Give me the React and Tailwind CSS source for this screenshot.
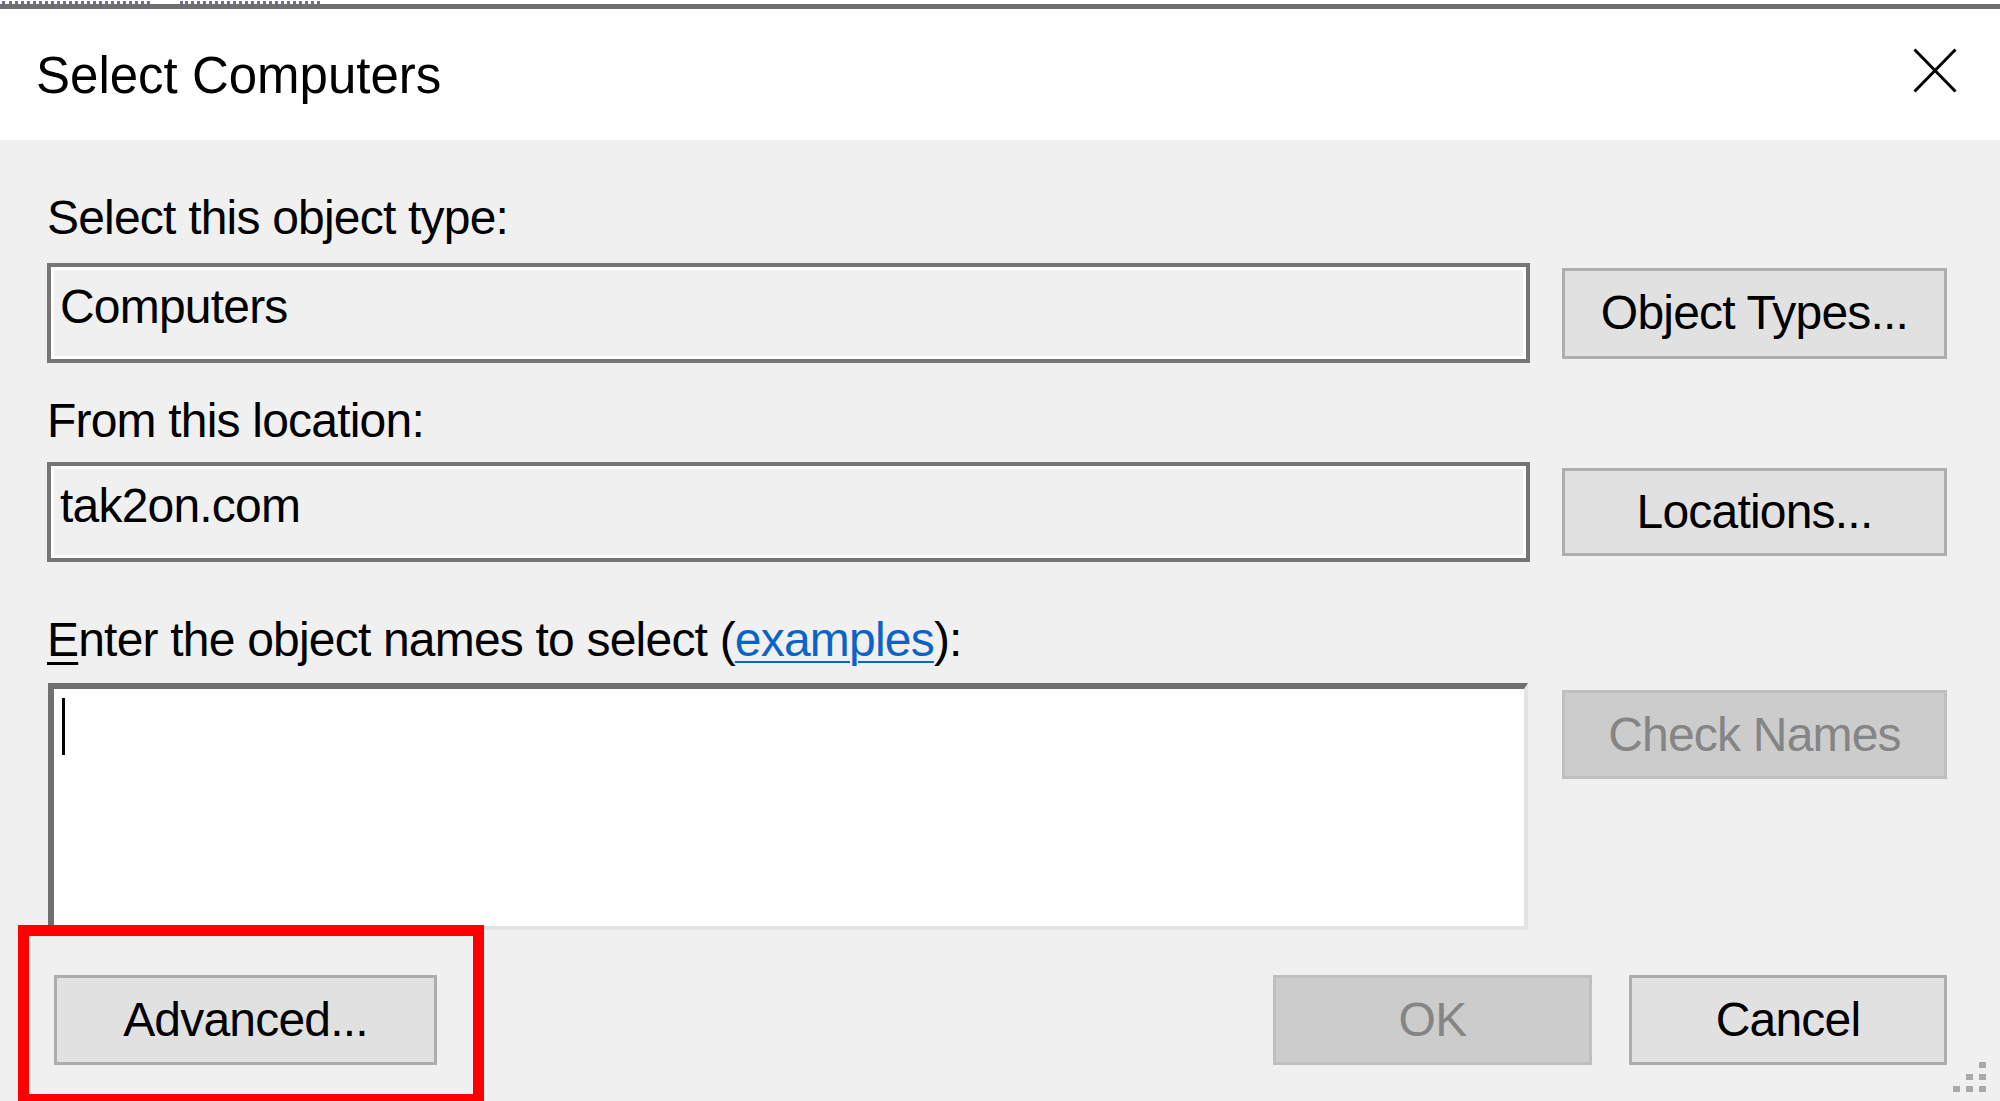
import React from "react";

function Btn({ children, disabled, className = "" }) {
  return (
    <div
      className={
        "flex items-center justify-center border-[3px] text-[48px] leading-[48px] tracking-[-0.8px] " +
        (disabled
          ? "bg-[#cccccc] border-[#bfbfbf] text-[#858585] "
          : "bg-[#e1e1e1] border-[#adadad] text-black ") +
        className
      }
    >
      {children}
    </div>
  );
}

function ReadBox({ children }) {
  return (
    <div className="w-[1483px] h-[100px] border-[4px] border-[#767676] bg-[#f0f0f0] shadow-[inset_0_0_0_3px_#ffffff] pl-[9px] pt-[16px] text-[48px] leading-[48px] tracking-[-0.8px] text-black">
      {children}
    </div>
  );
}

export default function App() {
  return (
    <div className="relative w-[2000px] h-[1101px] overflow-hidden bg-[#f0f0f0] font-['Liberation_Sans',Arial,sans-serif] text-black">
      {/* top strip with cut-off fragments of the window behind */}
      <div className="h-[4px] bg-white flex items-end gap-[30px] pl-[2px]">
        <div className="w-[148px] h-[3px] border-b-[3px] border-dotted border-[#7a6a9a]" />
        <div className="w-[140px] h-[3px] border-b-[3px] border-dotted border-[#7a6a9a]" />
      </div>
      <div className="h-[5px] bg-[#6e6e6e]" />

      {/* title bar */}
      <div className="h-[131px] bg-white flex justify-between items-start pl-[36px] pr-[43px]">
        <span className="mt-[41px] text-[51px] leading-[51px]">Select Computers</span>
        <svg className="mt-[39px]" width="44" height="45" viewBox="0 0 44 45">
          <path d="M1.5 1.5 L42.5 43.5 M42.5 1.5 L1.5 43.5" stroke="#000" strokeWidth="3" fill="none" />
        </svg>
      </div>

      {/* content */}
      <div className="pl-[47px] pr-[53px] flex flex-col">
        <div className="mt-[54px] text-[48px] leading-[48px] tracking-[-0.8px]">Select this object type:</div>
        <div className="mt-[21px] flex items-center gap-[32px]">
          <ReadBox>Computers</ReadBox>
          <Btn className="w-[385px] h-[91px]">Object Types...</Btn>
        </div>

        <div className="mt-[34px] text-[48px] leading-[48px] tracking-[-0.8px]">From this location:</div>
        <div className="mt-[17px] flex items-center gap-[32px]">
          <ReadBox>tak2on.com</ReadBox>
          <Btn className="w-[385px] h-[88px]">Locations...</Btn>
        </div>

        <div className="mt-[54px] text-[48px] leading-[48px] tracking-[-0.8px] whitespace-nowrap">
          <span className="underline decoration-[3px] underline-offset-[6px]">E</span>nter the object names to select (
          <span className="text-[#0a64c8] underline decoration-[2px] underline-offset-[5px]">examples</span>):
        </div>
        <div className="mt-[19px] flex items-start">
          <div className="ml-[1px] w-[1480px] h-[247px] bg-white border-t-[6px] border-l-[6px] border-r-[4px] border-b-[4px] border-t-[#6f6f6f] border-l-[#6f6f6f] border-r-[#e3e3e3] border-b-[#e3e3e3]">
            <div className="ml-[8px] mt-[9px] w-[3px] h-[57px] bg-black" />
          </div>
          <Btn disabled className="ml-[34px] mt-[7px] w-[385px] h-[89px]">Check Names</Btn>
        </div>

        <div className="mt-[45px] flex items-center">
          <Btn className="ml-[7px] w-[383px] h-[90px]">Advanced...</Btn>
          <div className="flex-1" />
          <Btn disabled className="w-[319px] h-[90px]">OK</Btn>
          <Btn className="ml-[37px] w-[318px] h-[90px]">Cancel</Btn>
        </div>
      </div>

      {/* red highlight annotation */}
      <div className="absolute left-[18px] top-[925px] w-[466px] h-[180px] border-[11px] border-[#ff0000]" />

      {/* resize grip */}
      <div className="absolute left-[1953px] top-[1062px] grid grid-cols-3 gap-[6px]">
        <div className="w-[7px] h-[6px]" />
        <div className="w-[7px] h-[6px]" />
        <div className="w-[7px] h-[6px] bg-[#a9a9a9]" />
        <div className="w-[7px] h-[6px]" />
        <div className="w-[7px] h-[6px] bg-[#a9a9a9]" />
        <div className="w-[7px] h-[6px] bg-[#a9a9a9]" />
        <div className="w-[7px] h-[6px] bg-[#a9a9a9]" />
        <div className="w-[7px] h-[6px] bg-[#a9a9a9]" />
        <div className="w-[7px] h-[6px] bg-[#a9a9a9]" />
      </div>
    </div>
  );
}
